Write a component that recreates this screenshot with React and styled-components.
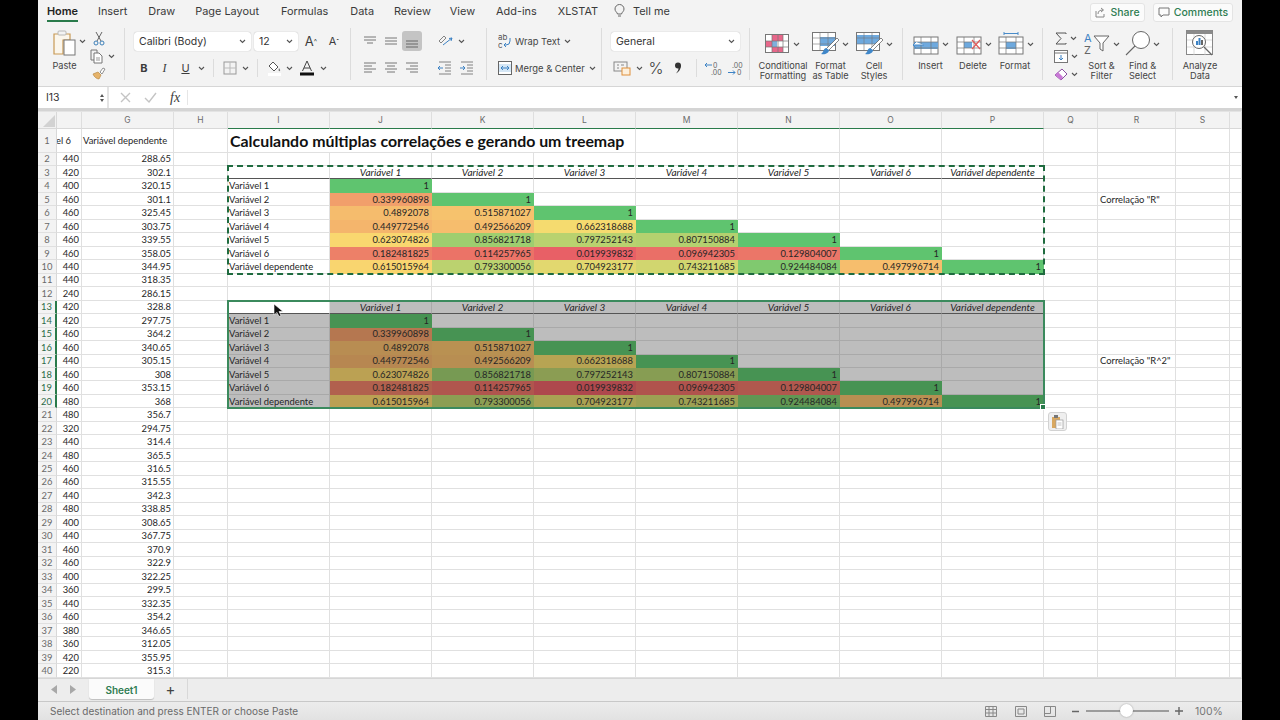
import React from "react";
import styled, {createGlobalStyle} from "styled-components";

const GlobalStyle = createGlobalStyle`
    html, body {
        margin: 0;
        padding: 0;
        background: #000;
        overflow: hidden;
    }
`;

const Screen = styled.div`
    width: 1280px;
    height: 720px;
    display: flex;
    justify-content: center;
    background: #000;
`;

const Excel = styled.div`
    width: 1204px;
    height: 720px;
    display: flex;
    flex-direction: column;
    background: #f3f3f3;
    font-family: Inter, "Liberation Sans", sans-serif;
    color: #444;
    overflow: hidden;
`;

/* top tabs */
const TabBar = styled.div`
    height: 28px;
    display: flex;
    align-items: flex-start;
    position: relative;
`;

const Tab = styled.div`
    margin-left: ${props => props.$left}px;
    padding-top: 4px;
    height: 16px;
    line-height: 15px;
    font-size: 10.9px;
    font-weight: ${props => (props.$active ? 600 : 400)};
    color: ${props => (props.$active ? "#222" : "#3a3a3a")};
    border-bottom: ${props => (props.$active ? "2px solid #2a7b4b" : "none")};
    white-space: nowrap;
`;

const TabRight = styled.div`
    margin-left: auto;
    margin-right: 9px;
    display: flex;
    gap: 8px;
    padding-top: 3px;
`;

const OutlineButton = styled.div`
    height: 19px;
    width: ${props => props.$w}px;
    box-sizing: border-box;
    display: flex;
    align-items: center;
    justify-content: center;
    gap: 4px;
    background: #fbfbfb;
    border: 1px solid #e4e4e4;
    border-radius: 3px;
    color: #2f7d52;
    font-size: 10.5px;
    font-weight: 500;
`;

/* ribbon */
const Ribbon = styled.div`
    height: 59px;
    display: flex;
    align-items: flex-start;
    border-bottom: 1px solid #d6d6d6;
    box-sizing: border-box;
`;

const Group = styled.div`
    width: ${props => props.$w}px;
    height: 52px;
    box-sizing: border-box;
    padding-left: ${props => props.$pad || 0}px;
    border-right: ${props => (props.$last ? "none" : "1px solid #dcdcdc")};
    display: flex;
    flex-shrink: 0;
`;

const Stack = styled.div`
    display: flex;
    flex-direction: column;
    gap: 7px;
    padding-top: 3px;
`;

const ToolRow = styled.div`
    height: 20px;
    display: flex;
    align-items: center;
`;

const Slot = styled.div`
    width: ${props => props.$w}px;
    height: 20px;
    flex-shrink: 0;
    display: flex;
    align-items: center;
    justify-content: center;
    border-radius: 3px;
    background: ${props => (props.$on ? "#c4c4c4" : "transparent")};
    color: #444;
`;

const Sep = styled.div`
    width: 1px;
    height: 18px;
    background: #dcdcdc;
    margin: 0 ${props => props.$m}px;
    flex-shrink: 0;
`;

const Select = styled.div`
    width: ${props => props.$w}px;
    height: 19px;
    box-sizing: border-box;
    margin-right: ${props => props.$mr || 0}px;
    padding: 0 5px;
    flex-shrink: 0;
    display: flex;
    align-items: center;
    justify-content: space-between;
    background: #fff;
    border-radius: 3px;
    box-shadow: 0 0 1px rgba(0, 0, 0, 0.35);
    font-size: 10.5px;
    color: #333;
`;

const ToolLabel = styled.span`
    font-size: 9.4px;
    color: #444;
    white-space: nowrap;
`;

const BigButton = styled.div`
    width: ${props => props.$w}px;
    flex-shrink: 0;
    display: flex;
    flex-direction: column;
    align-items: center;
    padding-top: 1px;
`;

const BigIcon = styled.div`
    height: 30px;
    flex-shrink: 0;
    display: flex;
    align-items: center;
    gap: 2px;
`;

const BigLabel = styled.div`
    font-size: 9.2px;
    line-height: 10px;
    text-align: center;
    color: #444;
    white-space: nowrap;
    margin-top: 2px;
    flex-shrink: 0;
`;

const LetterTool = styled.span`
    font-family: ${props => (props.$serif ? '"Liberation Serif", serif' : "Inter, sans-serif")};
    font-size: ${props => props.$size || 11}px;
    font-weight: ${props => (props.$bold ? 700 : props.$thin ? 300 : 400)};
    font-style: ${props => (props.$italic ? "italic" : "normal")};
    text-decoration: ${props => (props.$under ? "underline" : "none")};
    color: #3c3c3c;
`;

/* formula bar */
const FormulaBar = styled.div`
    height: 21px;
    display: flex;
    background: #fff;
    margin-top: 0;
    font-size: 10.5px;
`;

const NameBox = styled.div`
    width: 70px;
    margin-left: 1px;
    box-sizing: border-box;
    padding-left: 7px;
    display: flex;
    align-items: center;
    justify-content: space-between;
    border-right: 2px solid #e4e4e4;
    color: #333;
`;

const Stepper = styled.div`
    display: flex;
    flex-direction: column;
    gap: 2px;
    margin-right: 3px;
`;

const TriUp = styled.div`
    width: 0;
    height: 0;
    border-left: 2.5px solid transparent;
    border-right: 2.5px solid transparent;
    border-bottom: 3.5px solid #555;
`;

const TriDown = styled(TriUp)`
    transform: rotate(180deg);
`;

const FormulaTools = styled.div`
    width: 79px;
    display: flex;
    align-items: center;
    padding-left: 11px;
    gap: 13px;
    box-sizing: border-box;
    border-right: 1px solid #e6e6e6;
    margin: 3px 0;
`;

const FormulaInput = styled.div`
    flex: 1;
    display: flex;
    align-items: center;
    justify-content: flex-end;
    padding-right: 4px;
`;

const Gutter = styled.div`
    height: 4px;
    background: #d4d4d4;
    border-bottom: 1px solid #e3e3e3;
    box-sizing: border-box;
`;

/* the sheet */
const Sheet = styled.div`
    flex: 1;
    min-height: 0;
    display: grid;
    grid-template-columns: 19px 25px 92px 54px repeat(8, 102px) 54px 78px 54px 12px;
    grid-template-rows: 17px 23.5px repeat(39, 13.47px);
    background: #fff;
    overflow: hidden;
    position: relative;
    font-family: Lato, "Open Sans", sans-serif;
    font-size: 9.4px;
    color: #262626;
`;

const Corner = styled.div`
    background: #f1f1f1;
    border-right: 1px solid #d8d8d8;
    border-bottom: 1px solid #d8d8d8;
    position: relative;
    &::after {
        content: "";
        position: absolute;
        right: 1px;
        bottom: 1px;
        width: 12px;
        height: 12px;
        background: #d2d2d2;
        clip-path: polygon(100% 0, 100% 100%, 0 100%);
    }
`;

const ColHead = styled.div`
    background: #f3f3f3;
    border-right: 1px solid #dedede;
    border-bottom: ${props => (props.$hot ? "1px solid #2a7b4b" : "1px solid #d8d8d8")};
    display: flex;
    align-items: center;
    justify-content: center;
    font-family: Inter, sans-serif;
    font-size: 8.5px;
    color: #6a6a6a;
`;

const RowHead = styled.div`
    background: #f3f3f3;
    border-right: ${props => (props.$hot ? "2px solid #2a7b4b" : "1px solid #d8d8d8")};
    border-bottom: 1px solid #e0e0e0;
    display: flex;
    align-items: center;
    justify-content: center;
    font-size: 9.4px;
    color: ${props => (props.$hot ? "#2c6b48" : "#6a6a6a")};
`;

const Cell = styled.div`
    box-sizing: border-box;
    padding: 0 ${props => props.$pad || 2}px;
    display: flex;
    align-items: center;
    justify-content: ${props => props.$justify || "flex-end"};
    white-space: nowrap;
    overflow: visible;
    border-right: 1px solid ${props => (props.$gray ? "#a9a9a9" : "#e0e0e0")};
    border-bottom: 1px solid ${props => props.$line || "#e0e0e0"};
    background: ${props => (props.$gray ? "#bdbdbd" : "transparent")};
    font-style: ${props => (props.$italic ? "italic" : "normal")};
    font-size: ${props => (props.$italic ? "10px" : "inherit")};
    position: ${props => (props.$rel ? "relative" : "static")};
`;

const ClipCell = styled(Cell)`
    overflow: hidden;
    padding-right: 10px;
`;

const TitleCell = styled(Cell)`
    grid-column: span 4;
    justify-content: flex-start;
    font-size: 15.9px;
    font-weight: 700;
    color: #111;
    padding-left: 2px;
`;

const Marching = styled.div`
    position: absolute;
    grid-column: 5 / 13;
    grid-row: 4 / 12;
    inset: -1px -1px -1px -1px;
    border: 2px dashed #1f6b3f;
    pointer-events: none;
`;

const Selection = styled.div`
    position: absolute;
    grid-column: 5 / 13;
    grid-row: 14 / 22;
    inset: -1px -1px -1px -1px;
    border: 2px solid #3b8a5d;
    pointer-events: none;
    &::after {
        content: "";
        position: absolute;
        right: -3px;
        bottom: -3px;
        width: 4px;
        height: 4px;
        background: #2a7b4b;
        border: 1px solid #fff;
    }
`;

const PasteChip = styled.div`
    position: absolute;
    grid-column: 13;
    grid-row: 22;
    left: 4px;
    top: 4px;
    width: 19px;
    height: 19px;
    box-sizing: border-box;
    display: flex;
    align-items: center;
    justify-content: center;
    background: #efefef;
    border: 1px solid #d2d2d2;
    border-radius: 3px;
`;

const Pointer = styled.svg`
    position: absolute;
    left: 45px;
    top: 2px;
`;

/* bottom */
const SheetTabs = styled.div`
    height: 23px;
    flex-shrink: 0;
    display: flex;
    align-items: flex-start;
    background: #ededed;
    border-top: 1px solid #d6d6d6;
    box-sizing: border-box;
`;

const NavArrows = styled.div`
    width: 51px;
    height: 20px;
    display: flex;
    align-items: center;
    justify-content: center;
    gap: 13px;
`;

const SheetTab = styled.div`
    width: 65px;
    height: 20px;
    display: flex;
    align-items: center;
    justify-content: center;
    padding-top: 1px;
    box-sizing: border-box;
    background: #fbfbfb;
    border-radius: 0 0 3px 3px;
    box-shadow: 0 1px 1px rgba(0, 0, 0, 0.2);
    color: #2f7d52;
    font-size: 10px;
    font-weight: 600;
`;

const AddSheet = styled.div`
    width: 33px;
    height: 20px;
    display: flex;
    align-items: center;
    justify-content: center;
    border-right: 1px solid #d8d8d8;
    font-size: 15px;
    color: #444;
`;

const StatusBar = styled.div`
    height: 19px;
    flex-shrink: 0;
    display: flex;
    align-items: center;
    padding-left: 12px;
    background: linear-gradient(#ececec, #e2e2e2);
    border-top: 1px solid #c8c8c8;
    box-sizing: border-box;
    font-size: 10px;
    color: #6a6a6a;
`;

const StatusRight = styled.div`
    margin-left: auto;
    display: flex;
    align-items: center;
    width: 266px;
    color: #777;
`;

const Zoomer = styled.div`
    width: 83px;
    height: 2px;
    background: #9c9c9c;
    position: relative;
    margin-right: 4px;
`;

const Knob = styled.div`
    position: absolute;
    left: 34px;
    top: -6px;
    width: 13px;
    height: 13px;
    border-radius: 50%;
    background: #fff;
    box-shadow: 0 0 2px rgba(0, 0, 0, 0.35);
`;

const Percent = styled.span`
    margin-left: 10px;
    font-size: 10.5px;
`;

const Chev = ({mx = 0}) => (
    <svg width="7" height="5" viewBox="0 0 7 5" style={{margin: `0 ${mx}px`, flexShrink: 0}}>
        <path d="M1 1l2.5 2.5L6 1" fill="none" stroke="#555" strokeWidth="1.1"/>
    </svg>
);

const Lines = ({rows, stroke = "#777"}) => (
    <svg width="16" height="14" viewBox="0 0 16 14">
        {rows.map(([x1, x2, y], i) => <path key={i} d={`M${x1} ${y}H${x2}`} stroke={stroke} strokeWidth="1"/>)}
    </svg>
);

const PasteIcon = () => (
    <svg width="26" height="28" viewBox="0 0 26 28">
        <path d="M2 4h5V2h6v2h5v6H11v14H2z" fill="#fbf6ec" stroke="#c99a55" strokeWidth="1.2"/>
        <rect x="6" y="1" width="8" height="4" rx="1" fill="#f3f3f3" stroke="#b8b8b8"/>
        <rect x="12" y="10" width="11" height="15" fill="#fff" stroke="#777"/>
    </svg>
);

const Scissors = () => (
    <svg width="12" height="15" viewBox="0 0 12 15">
        <path d="M3 1l5 9M9 1L4 10" stroke="#666" fill="none"/>
        <circle cx="3" cy="12" r="2" fill="none" stroke="#3c7fb8"/>
        <circle cx="9" cy="12" r="2" fill="none" stroke="#3c7fb8"/>
    </svg>
);

const CopyIcon = () => (
    <svg width="14" height="15" viewBox="0 0 14 15">
        <path d="M1 1h6v3M1 1v10h3" fill="none" stroke="#777"/>
        <path d="M4 4h5l3 3v7H4z" fill="#fff" stroke="#777"/>
        <path d="M6 9h4M6 11h4" stroke="#999"/>
    </svg>
);

const Painter = () => (
    <svg width="14" height="14" viewBox="0 0 14 14">
        <path d="M1 8l5-2 3 3-2 4c-2 0-5-2-6-5z" fill="#e6b36a" stroke="#b98a45" strokeWidth=".7"/>
        <path d="M8 6l3-4 2 1-3 5z" fill="#fff" stroke="#777" strokeWidth=".8"/>
    </svg>
);

const Borders = () => (
    <svg width="14" height="14" viewBox="0 0 14 14">
        <rect x="1" y="1" width="12" height="12" fill="none" stroke="#999"/>
        <path d="M7 1v12M1 7h12" stroke="#bbb"/>
    </svg>
);

const FillColor = () => (
    <svg width="15" height="15" viewBox="0 0 15 15">
        <path d="M6 1l5 5-4 4-5-5z" fill="#fff" stroke="#555"/>
        <path d="M12 7c1 1.500 1.500 2 1 3-1 .5-2 0-1-3z" fill="#777"/>
        <rect x="1" y="12" width="13" height="3" fill="#fff"/>
    </svg>
);

const FontColor = () => (
    <svg width="14" height="16" viewBox="0 0 14 16">
        <path d="M2.500 11L7 1l4.500 10M4 8h6" fill="none" stroke="#444"/>
        <rect x="0" y="12.500" width="14" height="3" fill="#111"/>
    </svg>
);

const Orient = () => (
    <svg width="16" height="14" viewBox="0 0 16 14">
        <path d="M2 7l5-5 2 2-5 5z" fill="none" stroke="#777" strokeWidth=".9"/>
        <path d="M6 11L15 4M15 4l-3 .5M15 4l-1 3" stroke="#3c82c4" fill="none"/>
    </svg>
);

const Indent = ({flip}) => (
    <svg width="16" height="14" viewBox="0 0 16 14">
        <path d="M2 1h12M8 4h6M8 7h6M8 10h6M2 13h12" stroke="#777" strokeWidth=".9"/>
        <path d={flip ? "M1 7h5M4 5l2 2-2 2" : "M6 7H1M3 5L1 7l2 2"} stroke="#3c82c4" fill="none"/>
    </svg>
);

const WrapIcon = () => (
    <svg width="14" height="16" viewBox="0 0 14 16">
        <text x="0" y="7" fontSize="8" fill="#555" fontFamily="Inter">ab</text>
        <text x="0" y="15" fontSize="8" fill="#555" fontFamily="Inter">c</text>
        <path d="M12 5v3q0 4-4 4H6M8 10l-2 2 2 2" fill="none" stroke="#3c82c4"/>
    </svg>
);

const MergeIcon = () => (
    <svg width="14" height="14" viewBox="0 0 14 14">
        <rect x=".5" y=".5" width="13" height="13" fill="#fff" stroke="#666"/>
        <rect x="1" y="3" width="12" height="8" fill="#d5e7f6"/>
        <path d="M3 7h8M5 5L3 7l2 2M9 5l2 2-2 2" fill="none" stroke="#3c82c4"/>
    </svg>
);

const Accounting = () => (
    <svg width="18" height="15" viewBox="0 0 18 15">
        <rect x="1" y="1" width="13" height="9" fill="none" stroke="#888"/>
        <path d="M4 4h2M4 7h2M8 4h3" stroke="#888"/>
        <rect x="9" y="7" width="8" height="7" fill="#fdf0dd" stroke="#e0903a"/>
    </svg>
);

const CommaIcon = () => (
    <svg width="8" height="12" viewBox="0 0 8 12">
        <circle cx="4" cy="3.500" r="3" fill="#333"/>
        <path d="M6.800 3.500C7 7 5 10 2 11.500 4 9 4.500 7.500 4.500 6z" fill="#333"/>
    </svg>
);

const Decimal = ({more}) => (
    <svg width="20" height="15" viewBox="0 0 20 15">
        <text x={more ? 9 : 7} y="6.500" fontSize="7" fill="#666" fontFamily="Inter">{more ? "0" : ".00"}</text>
        <text x={more ? 7 : 12} y="14" fontSize="7" fill="#666" fontFamily="Inter">{more ? ".00" : "0"}</text>
        {more
            ? <path d="M8 4H1M1 4l2-2M1 4l2 2" stroke="#3c82c4" fill="none"/>
            : <path d="M3 11.500h7M10 11.500l-2-2M10 11.500l-2 2" stroke="#3c82c4" fill="none"/>}
    </svg>
);

const CondFormat = () => (
    <svg width="24" height="20" viewBox="0 0 24 20">
        <rect x=".5" y=".5" width="23" height="18" fill="#fff" stroke="#777"/>
        <rect x="7" y="1" width="11" height="6" fill="#e8678a"/>
        <rect x="1" y="7" width="6" height="6" fill="#e8678a"/>
        <rect x="7" y="7" width="5" height="6" fill="#7fb0dd"/>
        <rect x="7" y="13" width="11" height="5" fill="#e8678a"/>
        <path d="M.5 7h23M.5 13h23M7 .5v18M13 .5v18M18 .5v18" stroke="#777" strokeWidth=".7"/>
    </svg>
);

const TableStyle = ({fullHead}) => (
    <svg width="28" height="24" viewBox="0 0 28 24">
        <rect x=".5" y=".5" width="23" height="18" fill="#fff" stroke="#777"/>
        <rect x={fullHead ? 1 : 8} y={fullHead ? 3 : 5} width={fullHead ? 22 : 15} height={fullHead ? 9 : 9} fill="#6ea9de"/>
        <path d="M.5 6h23M.5 12h23M8 .5v18M16 .5v18" stroke="#777" strokeWidth=".6"/>
        <path d="M25 6L15 16l-2 2 3 1 2-2L27 8z" fill="#fff" stroke="#555" strokeWidth=".7"/>
        <path d="M14 16c-3 1-2 4-5 6 4 1 8-1 8-4z" fill="#3f87c9"/>
    </svg>
);

const CellsIcon = ({kind}) => (
    <svg width="28" height="24" viewBox="0 0 28 24">
        {kind === "format" && <path d="M7 1.500h14M7 0v3M21 0v3" stroke="#4a8cc9"/>}
        <rect x="2" y="5" width="24" height="17" fill="#fff" stroke="#777"/>
        {kind === "insert" && <rect x="2" y="10" width="24" height="7" fill="#6ea9de"/>}
        {kind === "delete" && <rect x="9" y="10" width="8" height="6" fill="#6ea9de"/>}
        {kind === "format" && <rect x="9" y="10" width="10" height="7" fill="#6ea9de"/>}
        <path d="M2 10h24M2 16h24M9 5v17M19 5v17" stroke="#777" strokeWidth=".7"/>
        {kind === "insert" && <path d="M12 13H1l3-3M1 13l3 3" stroke="#4a8cc9" fill="#fff"/>}
        {kind === "delete" && <path d="M17 8l8 9M25 8l-8 9" stroke="#e05a5a" strokeWidth="1.2"/>}
    </svg>
);

const Sigma = () => (
    <svg width="12" height="13" viewBox="0 0 12 13">
        <path d="M11 2V1H1l5 5.500L1 12h10v-1" fill="none" stroke="#555"/>
    </svg>
);

const FillDown = () => (
    <svg width="14" height="13" viewBox="0 0 14 13">
        <rect x=".5" y=".5" width="13" height="12" fill="#fff" stroke="#777"/>
        <path d="M.5 3h13" stroke="#777"/>
        <path d="M7 5v5M5 8l2 2 2-2" stroke="#3c82c4" fill="none"/>
    </svg>
);

const Eraser = () => (
    <svg width="14" height="13" viewBox="0 0 14 13">
        <path d="M8 1l5 5-6 6-6-5z" fill="#fff" stroke="#8a4fa0"/>
        <path d="M1 7l3-3 5 5-2 3z" fill="#c979d6"/>
    </svg>
);

const SortIcon = () => (
    <svg width="27" height="26" viewBox="0 0 27 26">
        <text x="0" y="11" fontSize="11" fill="#3c82c4" fontFamily="Inter">A</text>
        <text x="0" y="23" fontSize="11" fill="#666" fontFamily="Inter">Z</text>
        <path d="M10 5h15l-6 7v8l-3-2v-6z" fill="#fff" stroke="#666"/>
    </svg>
);

const FindIcon = () => (
    <svg width="26" height="26" viewBox="0 0 26 26">
        <circle cx="16" cy="9" r="8.500" fill="#fff" stroke="#666"/>
        <path d="M10 15L1 24" stroke="#666" strokeWidth="1.1"/>
    </svg>
);

const AnalyzeIcon = () => (
    <svg width="28" height="28" viewBox="0 0 28 28">
        <rect x=".5" y=".5" width="26" height="24" fill="#fff" stroke="#888"/>
        <rect x="1" y="1" width="25" height="3" fill="#8b8b8b"/>
        <path d="M1 10h25M1 17h25M8 4v21M19 4v21" stroke="#ccc" strokeWidth=".7"/>
        <circle cx="13" cy="12" r="6.500" fill="#fff" stroke="#666"/>
        <rect x="10" y="11" width="2" height="4" fill="#3c82c4"/>
        <rect x="12.500" y="8" width="2" height="7" fill="#3c82c4"/>
        <rect x="15" y="10" width="2" height="5" fill="#666"/>
        <path d="M18 17l8 8" stroke="#666" strokeWidth="1.300"/>
    </svg>
);

const Bulb = () => (
    <svg width="11" height="14" viewBox="0 0 11 14">
        <path d="M3.500 10C3 8 1 7.500 1 5a4.500 4.500 0 0 1 9 0c0 2.500-2 3-2.500 5zM4 12h3" fill="none" stroke="#666"/>
    </svg>
);

const ShareIcon = () => (
    <svg width="11" height="11" viewBox="0 0 11 11">
        <path d="M1 4v6h8V7M3 7c0-3 2-4 5-4M6 1l2.500 2L6 5" fill="none" stroke="#888"/>
    </svg>
);

const CommentIcon = () => (
    <svg width="12" height="11" viewBox="0 0 12 11">
        <path d="M1 1h10v7H5L3 10V8H1z" fill="none" stroke="#777"/>
    </svg>
);

const ClipSmall = () => (
    <svg width="13" height="14" viewBox="0 0 13 14">
        <path d="M1 2h8v11H1z" fill="#d9a860"/>
        <rect x="3" y="0" width="4" height="3" fill="#777"/>
        <rect x="5" y="5" width="7" height="9" fill="#fff" stroke="#999" strokeWidth=".7"/>
        <path d="M6.500 8h4M6.500 10h4" stroke="#aaa" strokeWidth=".7"/>
    </svg>
);

const tabs = [
    ["Home", 9, true], ["Insert", 20], ["Draw", 21], ["Page Layout", 20], ["Formulas", 22], ["Data", 22],
    ["Review", 20], ["View", 19], ["Add-ins", 21], ["XLSTAT", 21],
];

const colLetters = ["F", "G", "H", "I", "J", "K", "L", "M", "N", "O", "P", "Q", "R", "S", "T"];

const colF = [440, 420, 400, 460, 460, 460, 460, 460, 440, 440, 240, 420, 420, 460, 460, 440, 460, 460, 480, 480, 320, 440, 480, 460, 460, 440, 480, 400, 440, 460, 460, 400, 360, 440, 460, 380, 360, 420, 220];
const colG = ["288.65", "302.1", "320.15", "301.1", "325.45", "303.75", "339.55", "358.05", "344.95", "318.35", "286.15", "328.8", "297.75", "364.2", "340.65", "305.15", "308", "353.15", "368", "356.7", "294.75", "314.4", "365.5", "316.5", "315.55", "342.3", "338.85", "308.65", "367.75", "370.9", "322.9", "322.25", "299.5", "332.35", "354.2", "346.65", "312.05", "355.95", "315.3"];

const names = ["Variável 1", "Variável 2", "Variável 3", "Variável 4", "Variável 5", "Variável 6", "Variável dependente"];

const matrix = [
    ["1"],
    ["0.339960898", "1"],
    ["0.4892078", "0.515871027", "1"],
    ["0.449772546", "0.492566209", "0.662318688", "1"],
    ["0.623074826", "0.856821718", "0.797252143", "0.807150884", "1"],
    ["0.182481825", "0.114257965", "0.019939832", "0.096942305", "0.129804007", "1"],
    ["0.615015964", "0.793300056", "0.704923177", "0.743211685", "0.924484084", "0.497996714", "1"],
];

const RED = [232, 96, 102];
const YELLOW = [250, 220, 111];
const GREEN = [95, 196, 111];

// same three colour scale as the sheet, darker when the range is selected
function heat(value, dark) {
    const v = parseFloat(value);
    const mid = 0.65;
    const [from, to, t] = v < mid ? [RED, YELLOW, (v - 0.02) / (mid - 0.02)] : [YELLOW, GREEN, (v - mid) / (1 - mid)];
    const k = dark ? 0.75 : 1;
    const rgb = from.map((c, i) => Math.round((c + (to[i] - c) * Math.min(1, Math.max(0, t))) * k));
    return `rgb(${rgb.join(",")})`;
}

function tableCells(row, colIdx, headRow, dark) {
    // colIdx 0 is column I, 1..7 are J..P
    if (row === headRow) {
        if (colIdx === 0) {
            return <Cell key={colIdx} $line="#555" $rel>
                {dark && <Pointer width="11" height="15" viewBox="0 0 11 15"><path d="M1 1v11l3-2.500 2 4 2-1-2-4h4z" fill="#111" stroke="#fff" strokeWidth=".6"/></Pointer>}
            </Cell>;
        }
        return <Cell key={colIdx} $justify="center" $italic $gray={dark} $line="#555">{names[colIdx - 1]}</Cell>;
    }
    const r = row - headRow - 1;
    if (colIdx === 0) {
        return <Cell key={colIdx} $pad={1} $justify="flex-start" $gray={dark} $line={dark ? "#a9a9a9" : undefined}>{names[r]}</Cell>;
    }
    const value = matrix[r][colIdx - 1];
    if (!value) {
        return <Cell key={colIdx} $gray={dark} $line={dark ? "#a9a9a9" : undefined}/>;
    }
    return <Cell key={colIdx} style={{background: heat(value, dark), borderColor: "transparent"}}>{value}</Cell>;
}

function sheetRow(row) {
    const hot = row >= 13 && row <= 20;
    const cells = [<RowHead key="head" $hot={hot}>{row}</RowHead>];
    if (row === 1) {
        cells.push(<ClipCell key="f"><span>el 6</span></ClipCell>);
        cells.push(<Cell key="g" $pad={1} $justify="flex-start">Variável dependente</Cell>);
        cells.push(<Cell key="h"/>);
        cells.push(<TitleCell key="i">Calculando múltiplas correlações e gerando um treemap</TitleCell>);
        ["m", "n", "o", "p", "q", "r", "s", "t"].forEach(k => cells.push(<Cell key={k}/>));
        return cells;
    }
    cells.push(<Cell key="f">{colF[row - 2]}</Cell>);
    cells.push(<Cell key="g">{colG[row - 2]}</Cell>);
    cells.push(<Cell key="h"/>);
    for (let c = 0; c < 8; c++) {
        if (row >= 3 && row <= 10) {
            cells.push(tableCells(row, c, 3, false));
        } else if (hot) {
            cells.push(tableCells(row, c, 13, true));
        } else {
            cells.push(<Cell key={c}/>);
        }
    }
    cells.push(<Cell key="q"/>);
    if (row === 5) {
        cells.push(<Cell key="r" $justify="flex-start">Correlação "R"</Cell>);
    } else if (row === 17) {
        cells.push(<Cell key="r" $justify="flex-start">Correlação "R^2"</Cell>);
    } else {
        cells.push(<Cell key="r"/>);
    }
    cells.push(<Cell key="s"/>);
    cells.push(<Cell key="t"/>);
    return cells;
}

const rowNumbers = Array.from({length: 40}, (_, i) => i + 1);

export default function App() {
    return (
        <Screen>
            <GlobalStyle/>
            <Excel>
                <TabBar>
                    {tabs.map(([name, left, active]) => <Tab key={name} $left={left} $active={active}>{name}</Tab>)}
                    <Slot $w={36} style={{marginLeft: 3, marginTop: 1}}><Bulb/></Slot>
                    <Tab $left={-4}>Tell me</Tab>
                    <TabRight>
                        <OutlineButton $w={55}><ShareIcon/>Share</OutlineButton>
                        <OutlineButton $w={80}><CommentIcon/>Comments</OutlineButton>
                    </TabRight>
                </TabBar>
                <Ribbon>
                    <Group $w={87} $pad={12}>
                        <BigButton $w={29}>
                            <BigIcon><PasteIcon/></BigIcon>
                            <BigLabel>Paste</BigLabel>
                        </BigButton>
                        <Stack>
                            <ToolRow><Chev/></ToolRow>
                        </Stack>
                        <div>
                            <Slot $w={26}><Scissors/></Slot>
                            <Slot $w={36} style={{height: 17}}><CopyIcon/><Chev mx={4}/></Slot>
                            <Slot $w={26} style={{height: 15}}><Painter/></Slot>
                        </div>
                    </Group>
                    <Group $w={226} $pad={9}>
                        <Stack>
                            <ToolRow>
                                <Select $w={117} $mr={3}>Calibri (Body)<Chev/></Select>
                                <Select $w={44}>12<Chev/></Select>
                                <Slot $w={26}><LetterTool $size={13}>A</LetterTool><LetterTool $size={7}>^</LetterTool></Slot>
                                <Slot $w={20}><LetterTool $size={11}>A</LetterTool><LetterTool $size={7}>ˇ</LetterTool></Slot>
                            </ToolRow>
                            <ToolRow>
                                <Slot $w={20}><LetterTool $bold>B</LetterTool></Slot>
                                <Slot $w={21}><LetterTool $serif $italic $size={12}>I</LetterTool></Slot>
                                <Slot $w={21}><LetterTool $under>U</LetterTool></Slot>
                                <Slot $w={11}><Chev/></Slot>
                                <Sep $m={6}/>
                                <Slot $w={20}><Borders/></Slot>
                                <Slot $w={11}><Chev/></Slot>
                                <Sep $m={6}/>
                                <Slot $w={20}><FillColor/></Slot>
                                <Slot $w={11}><Chev/></Slot>
                                <Slot $w={23}><FontColor/></Slot>
                                <Slot $w={11}><Chev/></Slot>
                            </ToolRow>
                        </Stack>
                    </Group>
                    <Group $w={136} $pad={8}>
                        <Stack>
                            <ToolRow>
                                <Slot $w={21}><Lines rows={[[2, 14, 3], [2, 14, 6], [5, 11, 9]]}/></Slot>
                                <Slot $w={22}><Lines rows={[[2, 14, 4], [2, 14, 7], [2, 14, 10]]}/></Slot>
                                <Slot $w={20} $on><Lines rows={[[2, 14, 7], [2, 14, 10], [2, 14, 13]]} stroke="#666"/></Slot>
                                <Slot $w={22} style={{marginLeft: 12}}><Orient/></Slot>
                                <Slot $w={11}><Chev/></Slot>
                            </ToolRow>
                            <ToolRow>
                                <Slot $w={21}><Lines rows={[[2, 14, 2], [2, 10, 5], [2, 14, 8], [2, 10, 11]]}/></Slot>
                                <Slot $w={22}><Lines rows={[[2, 14, 2], [4, 12, 5], [2, 14, 8], [4, 12, 11]]}/></Slot>
                                <Slot $w={20}><Lines rows={[[2, 14, 2], [6, 14, 5], [2, 14, 8], [6, 14, 11]]}/></Slot>
                                <Slot $w={22} style={{marginLeft: 12}}><Indent/></Slot>
                                <Slot $w={22}><Indent flip/></Slot>
                            </ToolRow>
                        </Stack>
                    </Group>
                    <Group $w={115} $pad={8}>
                        <Stack>
                            <ToolRow>
                                <Slot $w={20}><WrapIcon/></Slot>
                                <ToolLabel>Wrap Text</ToolLabel>
                                <Chev mx={4}/>
                            </ToolRow>
                            <ToolRow>
                                <Slot $w={20}><MergeIcon/></Slot>
                                <ToolLabel>Merge &amp; Center</ToolLabel>
                                <Chev mx={4}/>
                            </ToolRow>
                        </Stack>
                    </Group>
                    <Group $w={148} $pad={9}>
                        <Stack>
                            <ToolRow><Select $w={129}>General<Chev/></Select></ToolRow>
                            <ToolRow>
                                <Slot $w={22}><Accounting/></Slot>
                                <Slot $w={12}><Chev/></Slot>
                                <Slot $w={22}><LetterTool $size={16} $thin>%</LetterTool></Slot>
                                <Slot $w={22}><CommaIcon/></Slot>
                                <Sep $m={7}/>
                                <Slot $w={20}><Decimal more/></Slot>
                                <Slot $w={22}><Decimal/></Slot>
                            </ToolRow>
                        </Stack>
                    </Group>
                    <Group $w={153} $pad={8}>
                        <BigButton $w={50}>
                            <BigIcon><CondFormat/><Chev mx={2}/></BigIcon>
                            <BigLabel>Conditional<br/>Formatting</BigLabel>
                        </BigButton>
                        <BigButton $w={45}>
                            <BigIcon><TableStyle/><Chev/></BigIcon>
                            <BigLabel>Format<br/>as Table</BigLabel>
                        </BigButton>
                        <BigButton $w={42}>
                            <BigIcon><TableStyle fullHead/><Chev/></BigIcon>
                            <BigLabel>Cell<br/>Styles</BigLabel>
                        </BigButton>
                    </Group>
                    <Group $w={140} $pad={6}>
                        <BigButton $w={43}>
                            <BigIcon><CellsIcon kind="insert"/><Chev/></BigIcon>
                            <BigLabel>Insert</BigLabel>
                        </BigButton>
                        <BigButton $w={42}>
                            <BigIcon><CellsIcon kind="delete"/><Chev/></BigIcon>
                            <BigLabel>Delete</BigLabel>
                        </BigButton>
                        <BigButton $w={42}>
                            <BigIcon><CellsIcon kind="format"/><Chev/></BigIcon>
                            <BigLabel>Format</BigLabel>
                        </BigButton>
                    </Group>
                    <Group $w={130} $pad={10}>
                        <div>
                            <Slot $w={28} style={{height: 18, marginTop: 1}}><Sigma/><Chev mx={3}/></Slot>
                            <Slot $w={28} style={{height: 18}}><FillDown/><Chev mx={3}/></Slot>
                            <Slot $w={28} style={{height: 18}}><Eraser/><Chev mx={3}/></Slot>
                        </div>
                        <BigButton $w={41}>
                            <BigIcon><SortIcon/><Chev/></BigIcon>
                            <BigLabel>Sort &amp;<br/>Filter</BigLabel>
                        </BigButton>
                        <BigButton $w={41}>
                            <BigIcon><FindIcon/><Chev/></BigIcon>
                            <BigLabel>Find &amp;<br/>Select</BigLabel>
                        </BigButton>
                    </Group>
                    <Group $w={69} $pad={7} $last>
                        <BigButton $w={40}>
                            <BigIcon><AnalyzeIcon/></BigIcon>
                            <BigLabel>Analyze<br/>Data</BigLabel>
                        </BigButton>
                    </Group>
                </Ribbon>
                <FormulaBar>
                    <NameBox>I13<Stepper><TriUp/><TriDown/></Stepper></NameBox>
                    <FormulaTools>
                        <svg width="11" height="11" viewBox="0 0 11 11"><path d="M1 1l9 9M10 1l-9 9" stroke="#c4c4c4" strokeWidth="1.400"/></svg>
                        <svg width="13" height="11" viewBox="0 0 13 11"><path d="M1 6l4 4 7-9" fill="none" stroke="#c4c4c4" strokeWidth="1.400"/></svg>
                        <LetterTool $serif $italic $size={14}>fx</LetterTool>
                    </FormulaTools>
                    <FormulaInput><TriDown/></FormulaInput>
                </FormulaBar>
                <Gutter/>
                <Sheet>
                    <Corner/>
                    {colLetters.map(l => {
                        const hot = "IJKLMNOP".includes(l);
                        return <ColHead key={l} $hot={hot}>{l === "F" || l === "T" ? "" : l}</ColHead>;
                    })}
                    {rowNumbers.map(row => sheetRow(row))}
                    <Marching/>
                    <Selection/>
                    <PasteChip><ClipSmall/></PasteChip>
                </Sheet>
                <SheetTabs>
                    <NavArrows>
                        <svg width="6" height="9" viewBox="0 0 6 9"><path d="M6 0v9L0 4.500z" fill="#a8a8a8"/></svg>
                        <svg width="6" height="9" viewBox="0 0 6 9"><path d="M0 0v9l6-4.500z" fill="#a8a8a8"/></svg>
                    </NavArrows>
                    <SheetTab>Sheet1</SheetTab>
                    <AddSheet>+</AddSheet>
                </SheetTabs>
                <StatusBar>
                    Select destination and press ENTER or choose Paste
                    <StatusRight>
                        <Slot $w={30}><svg width="12" height="11" viewBox="0 0 12 11"><path d="M.5.500h11v10H.5zM.5 3.500h11M.5 7h11M4 .500v10M8 .500v10" fill="none" stroke="#888"/></svg></Slot>
                        <Slot $w={30}><svg width="12" height="11" viewBox="0 0 12 11"><path d="M.5.500h11v10H.5z" fill="none" stroke="#888"/><path d="M3 3h6v5H3z" fill="none" stroke="#888"/></svg></Slot>
                        <Slot $w={28}><svg width="12" height="11" viewBox="0 0 12 11"><path d="M.5.500h11v10H.5zM.5 7.500h6v-7" fill="none" stroke="#888"/></svg></Slot>
                        <Slot $w={22}><svg width="7" height="3" viewBox="0 0 7 3"><path d="M0 1.500h7" stroke="#666" strokeWidth="1.500"/></svg></Slot>
                        <Zoomer><Knob/></Zoomer>
                        <Slot $w={12}><svg width="8" height="8" viewBox="0 0 8 8"><path d="M0 4h8M4 0v8" stroke="#666" strokeWidth="1.400"/></svg></Slot>
                        <Percent>100%</Percent>
                    </StatusRight>
                </StatusBar>
            </Excel>
        </Screen>
    );
}
